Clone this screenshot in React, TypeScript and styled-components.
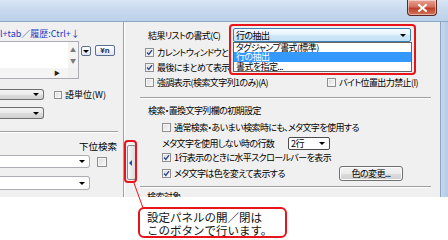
import React from 'react';
import styled, { createGlobalStyle, css } from 'styled-components';

const GlobalStyle = createGlobalStyle`
  html, body {
    margin: 0;
    padding: 0;
    background: #fff;
  }
`;

const Page = styled.div`
  position: relative;
  width: 448px;
  height: 240px;
  overflow: hidden;
  background: #fff;
  color: #000;
  font-family: "Noto Sans CJK JP", "Noto Sans", sans-serif;
  font-size: 9px;
  font-feature-settings: "palt";
  line-height: 1;
`;

const Window = styled.div`
  height: 197px;
  display: flex;
  flex-direction: column;
  overflow: hidden;
`;

const TitleBar = styled.div`
  height: 21px;
  flex-shrink: 0;
  display: flex;
  justify-content: flex-end;
  align-items: flex-start;
  padding-right: 11px;
  background: linear-gradient(180deg, #d9e6f5 0%, #c7d9ee 50%, #bcd1ea 100%);
  border-bottom: 1px solid #8ea5c2;
`;

const CloseButton = styled.div`
  width: 28px;
  height: 15px;
  display: flex;
  align-items: center;
  justify-content: center;
  border: 1px solid #5a2a26;
  border-top: none;
  border-radius: 0 0 4px 4px;
  background: linear-gradient(180deg, #e8a493 0%, #d4705b 45%, #c0402a 55%, #d2745c 100%);
  box-shadow: inset 0 0 0 1px rgba(255, 255, 255, 0.45);
`;

const Frame = styled.div`
  flex: 1;
  display: flex;
  min-height: 0;
`;

const Body = styled.div`
  flex: 1;
  display: flex;
  background: #f0f0f0;
  border-right: 1px solid #8ea5c2;
`;

const SideFrame = styled.div`
  width: 7px;
  background: linear-gradient(90deg, #c4d8ee 0%, #b4cbe6 100%);
`;

/* left panel */

const LeftPanel = styled.div`
  width: 123px;
  flex-shrink: 0;
  display: flex;
  flex-direction: column;
  padding-top: 6px;
  border-right: 1px solid #a0a0a0;
  box-shadow: 1px 0 0 #fff;
  > * {
    flex-shrink: 0;
  }
`;

const HintLabel = styled.div`
  height: 10px;
  display: flex;
  align-items: center;
  color: #1d39c4;
  white-space: nowrap;
`;

const EditRow = styled.div`
  margin-top: 3px;
  display: flex;
  align-items: flex-start;
  gap: 2px;
`;

const TextArea = styled.div`
  width: 78px;
  height: 36px;
  border: 1px solid #abadb3;
  border-left: none;
  background: #fff;
  display: grid;
  grid-template-columns: 1fr 10px;
  grid-template-rows: 1fr 10px;
`;

const ScrollV = styled.div`
  grid-column: 2;
  grid-row: 1;
  background: #f4f4f4;
  display: flex;
  flex-direction: column;
  align-items: center;
  justify-content: space-between;
  padding: 5px 0 4px;
  color: #7a7a7a;
  font-size: 6px;
`;

const ScrollH = styled.div`
  grid-column: 1;
  grid-row: 2;
  background: #f4f4f4;
  display: flex;
  align-items: center;
  justify-content: flex-end;
  padding-right: 8px;
  font-size: 6px;
  color: #222;
`;

const Grip = styled.div`
  grid-column: 2;
  grid-row: 2;
  background: #f0f0f0;
`;

const MiniButton = styled.div<{ $wide?: boolean }>`
  margin-top: ${({ $wide }) => ($wide ? 4 : 5)}px;
  margin-left: ${({ $wide }) => ($wide ? 2 : 0)}px;
  width: ${({ $wide }) => ($wide ? 18 : 8)}px;
  height: ${({ $wide }) => ($wide ? 9 : 8)}px;
  border: 1px solid #5b6f92;
  border-radius: 2px;
  background: linear-gradient(180deg, #ffffff 0%, #dfe6f0 100%);
  display: flex;
  align-items: center;
  justify-content: center;
  font-family: "Liberation Sans", sans-serif;
  font-weight: bold;
  font-size: 8px;
  color: #1c2b55;
`;

const ComboRow = styled.div<{ $top: number; $gap?: number }>`
  margin-top: ${({ $top }) => $top}px;
  display: flex;
  align-items: center;
  gap: ${({ $gap }) => $gap ?? 10}px;
`;

const Combo = styled.div<{ $w: number; $h: number; $flat?: boolean }>`
  width: ${({ $w }) => $w}px;
  height: ${({ $h }) => $h}px;
  box-sizing: border-box;
  display: flex;
  align-items: center;
  justify-content: flex-end;
  padding-right: 4px;
  border: 1px solid ${({ $flat }) => ($flat ? '#abadb3' : '#707070')};
  border-left: none;
  border-radius: 0 3px 3px 0;
  ${({ $flat }) =>
    $flat
      ? css`
          background: #fff;
        `
      : css`
          background: linear-gradient(180deg, #f3f3f3 0%, #ebebeb 50%, #dddddd 51%, #d0d0d0 100%);
        `}
`;

const Arrow = styled.span`
  width: 0;
  height: 0;
  border-left: 3px solid transparent;
  border-right: 3px solid transparent;
  border-top: 3px solid #000;
`;

const Rule = styled.div<{ $top: number; $left?: number; $right?: number }>`
  margin: ${({ $top }) => $top}px ${({ $right }) => $right ?? 0}px 0 ${({ $left }) => $left ?? 0}px;
  height: 1px;
  background: #a0a0a0;
  box-shadow: 0 1px 0 #fff;
`;

const RightLabel = styled.div`
  margin-top: 10px;
  width: 117px;
  height: 10px;
  display: flex;
  align-items: center;
  justify-content: flex-end;
  font-size: 9.5px;
`;

/* splitter */

const Splitter = styled.div`
  width: 14px;
  flex-shrink: 0;
  display: flex;
  justify-content: center;
  padding-top: 123px;
`;

const ToggleButton = styled.div`
  width: 7px;
  height: 33px;
  border: 1px solid #8a8a8a;
  border-radius: 2px;
  background: linear-gradient(90deg, #f6f6f6 0%, #dcdcdc 100%);
  display: flex;
  align-items: center;
  justify-content: center;
`;

const LeftTriangle = styled.span`
  width: 0;
  height: 0;
  border-top: 3px solid transparent;
  border-bottom: 3px solid transparent;
  border-right: 3px solid #1b4fb8;
  margin-left: -1px;
`;

/* right panel */

const RightPanel = styled.div`
  flex: 1;
  display: flex;
  flex-direction: column;
  padding-top: 6px;
  letter-spacing: -0.6px;
  > * {
    flex-shrink: 0;
  }
`;

const FormatRow = styled.div`
  height: 14px;
  display: flex;
  align-items: center;
  padding-left: 10px;
`;

const FieldLabel = styled.span<{ $w?: number }>`
  width: ${({ $w }) => ($w ? `${$w}px` : 'auto')};
  flex-shrink: 0;
  white-space: nowrap;
`;

const Select = styled.div`
  position: relative;
  width: 178px;
  height: 14px;
  box-sizing: border-box;
  border: 1px solid #3c7fb1;
  border-radius: 2px;
  background: linear-gradient(180deg, #f6fbfe 0%, #e4f2fb 50%, #d0e8f8 51%, #c4e1f6 100%);
  display: flex;
  align-items: center;
  justify-content: space-between;
  padding: 0 4px 0 2px;
`;

const OptionList = styled.div`
  position: absolute;
  top: 13px;
  left: -1px;
  width: 177px;
  border: 1px solid #646464;
  background: #fff;
  display: flex;
  flex-direction: column;
  z-index: 2;
`;

const Option = styled.div<{ $active?: boolean }>`
  height: 9.3px;
  display: flex;
  align-items: center;
  padding-left: 2px;
  white-space: nowrap;
  ${({ $active }) =>
    $active &&
    css`
      background: #3399ff;
      color: #fff;
    `}
`;

const CheckRow = styled.div<{ $indent: number; $h?: number; $top?: number }>`
  height: ${({ $h }) => $h ?? 15}px;
  margin-top: ${({ $top }) => $top ?? 0}px;
  display: flex;
  align-items: center;
  padding-left: ${({ $indent }) => $indent}px;
  white-space: nowrap;
`;

const CheckItem = styled.label<{ $w?: number; $clip?: boolean }>`
  display: flex;
  align-items: center;
  gap: 3px;
  width: ${({ $w }) => ($w ? `${$w}px` : 'auto')};
  flex-shrink: 0;
  ${({ $clip }) =>
    $clip &&
    css`
      overflow: hidden;
      line-height: 13px;
    `}
`;

const Box = styled.span<{ $size?: number }>`
  width: ${({ $size }) => ($size ?? 9) - 2}px;
  height: ${({ $size }) => ($size ?? 9) - 2}px;
  flex-shrink: 0;
  border: 1px solid #8f8f8f;
  background: linear-gradient(135deg, #d8d8d8 0%, #f2f2f2 70%, #fbfbfb 100%);
  box-shadow: inset 0 0 0 1px #f4f4f4;
  display: flex;
  align-items: center;
  justify-content: center;
`;

const SectionTitle = styled.div`
  margin-top: 7px;
  height: 10px;
  padding-left: 10px;
  display: flex;
  align-items: center;
`;

const SmallSelect = styled.div`
  width: 42px;
  height: 13px;
  box-sizing: border-box;
  border: 1px solid #4c4c4c;
  border-radius: 2px;
  background: #fff;
  display: flex;
  align-items: center;
  justify-content: space-between;
  padding: 0 4px 0 2px;
`;

const PushButton = styled.div`
  margin-left: auto;
  margin-right: 37px;
  width: 64px;
  height: 15px;
  box-sizing: border-box;
  border: 1px solid #707070;
  border-radius: 3px;
  background: linear-gradient(180deg, #f2f2f2 0%, #ebebeb 50%, #dddddd 51%, #cfcfcf 100%);
  box-shadow: inset 0 0 0 1px #fcfcfc;
  display: flex;
  align-items: center;
  justify-content: center;
`;

const CutLabel = styled.div`
  margin-top: 5px;
  padding-left: 9px;
  white-space: nowrap;
`;

/* annotations */

const Highlight = styled.div<{ $x: number; $y: number; $w: number; $h: number }>`
  position: absolute;
  left: ${({ $x }) => $x}px;
  top: ${({ $y }) => $y}px;
  width: ${({ $w }) => $w}px;
  height: ${({ $h }) => $h}px;
  box-sizing: border-box;
  border: 2px solid #e8141c;
  border-radius: 4px;
  pointer-events: none;
  z-index: 3;
`;

const Callout = styled.div`
  position: absolute;
  left: 138px;
  top: 207px;
  width: 149px;
  height: 31px;
  box-sizing: border-box;
  border: 2px solid #e8141c;
  border-radius: 6px;
  background: #fff;
  padding: 2px 0 0 7px;
  font-size: 11.5px;
  line-height: 12.5px;
  font-feature-settings: normal;
  color: #111;
  white-space: nowrap;
  z-index: 3;
`;

const Leader = styled.svg`
  position: absolute;
  left: 0;
  top: 0;
  z-index: 3;
  pointer-events: none;
`;

function Check({ on, size }: { on?: boolean; size?: number }) {
  return (
    <Box $size={size}>
      {on && (
        <svg width="7" height="7" viewBox="0 0 7 7">
          <path d="M1 3.6 L2.8 5.4 L6 1.2" fill="none" stroke="#2e4b8f" strokeWidth="1.4" />
        </svg>
      )}
    </Box>
  );
}

export default function App() {
  return (
    <Page>
      <GlobalStyle />
      <Window>
        <TitleBar>
          <CloseButton>
            <svg width="9" height="8" viewBox="0 0 9 8">
              <path d="M1 1 L8 7 M8 1 L1 7" stroke="#fff" strokeWidth="2" strokeLinecap="square" />
            </svg>
          </CloseButton>
        </TitleBar>
        <Frame>
          <Body>
            <LeftPanel>
              <HintLabel>l+tab／履歴:Ctrl+↓</HintLabel>
              <EditRow>
                <TextArea>
                  <ScrollV>
                    <span>▲</span>
                    <span>▼</span>
                  </ScrollV>
                  <ScrollH>▶</ScrollH>
                  <Grip />
                </TextArea>
                <MiniButton>
                  <Arrow />
                </MiniButton>
                <MiniButton $wide>¥n</MiniButton>
              </EditRow>
              <ComboRow $top={10}>
                <Combo $w={44} $h={11}>
                  <Arrow />
                </Combo>
                <CheckItem>
                  <Check size={8} />
                  語単位(W)
                </CheckItem>
              </ComboRow>
              <ComboRow $top={7}>
                <Combo $w={44} $h={12}>
                  <Arrow />
                </Combo>
              </ComboRow>
              <Rule $top={12} $right={5} />
              <RightLabel>下位検索</RightLabel>
              <ComboRow $top={3} $gap={7}>
                <Combo $w={90} $h={13} $flat>
                  <Arrow />
                </Combo>
                <Check size={10} />
              </ComboRow>
              <ComboRow $top={8}>
                <Combo $w={90} $h={14} $flat>
                  <Arrow />
                </Combo>
              </ComboRow>
            </LeftPanel>

            <Splitter>
              <ToggleButton>
                <LeftTriangle />
              </ToggleButton>
            </Splitter>

            <RightPanel>
              <FormatRow>
                <FieldLabel $w={85}>結果リストの書式(C)</FieldLabel>
                <Select>
                  <span>行の抽出</span>
                  <Arrow />
                  <OptionList>
                    <Option>タグジャンプ書式(標準)</Option>
                    <Option $active>行の抽出</Option>
                    <Option>書式を指定...</Option>
                  </OptionList>
                </Select>
              </FormatRow>
              <CheckRow $indent={7} $top={3}>
                <CheckItem $w={84} $clip>
                  <Check on />
                  カレントウィンドウと同じウィンドウ
                </CheckItem>
              </CheckRow>
              <CheckRow $indent={7}>
                <CheckItem $w={84} $clip>
                  <Check on />
                  最後にまとめて表示する
                </CheckItem>
              </CheckRow>
              <CheckRow $indent={7}>
                <CheckItem $w={182}>
                  <Check />
                  強調表示(検索文字列1のみ)(A)
                </CheckItem>
                <CheckItem>
                  <Check />
                  バイト位置出力禁止(I)
                </CheckItem>
              </CheckRow>
              <Rule $top={7} $left={2} $right={9} />
              <SectionTitle>検索・置換文字列欄の初期設定</SectionTitle>
              <CheckRow $indent={24} $top={5} $h={14}>
                <CheckItem>
                  <Check />
                  通常検索・あいまい検索時にも、メタ文字を使用する
                </CheckItem>
              </CheckRow>
              <CheckRow $indent={24} $top={2} $h={14}>
                <FieldLabel $w={126}>メタ文字を使用しない時の行数</FieldLabel>
                <SmallSelect>
                  <span>2行</span>
                  <Arrow />
                </SmallSelect>
              </CheckRow>
              <CheckRow $indent={24}>
                <CheckItem>
                  <Check on />
                  1行表示のときに水平スクロールバーを表示
                </CheckItem>
              </CheckRow>
              <CheckRow $indent={24} $h={16}>
                <CheckItem>
                  <Check on />
                  メタ文字は色を変えて表示する
                </CheckItem>
                <PushButton>色の変更...</PushButton>
              </CheckRow>
              <Rule $top={5} $left={2} $right={9} />
              <CutLabel>検索対象</CutLabel>
            </RightPanel>
          </Body>
          <SideFrame />
        </Frame>
      </Window>

      <Highlight $x={229} $y={24} $w={187} $h={51} />
      <Highlight $x={124} $y={140} $w={13} $h={43} />
      <Leader width="448" height="240">
        <line x1="134" y1="183" x2="143" y2="208" stroke="#e8141c" strokeWidth="1" />
      </Leader>
      <Callout>
        設定パネルの開／閉は
        <br />
        このボタンで行います。
      </Callout>
    </Page>
  );
}
